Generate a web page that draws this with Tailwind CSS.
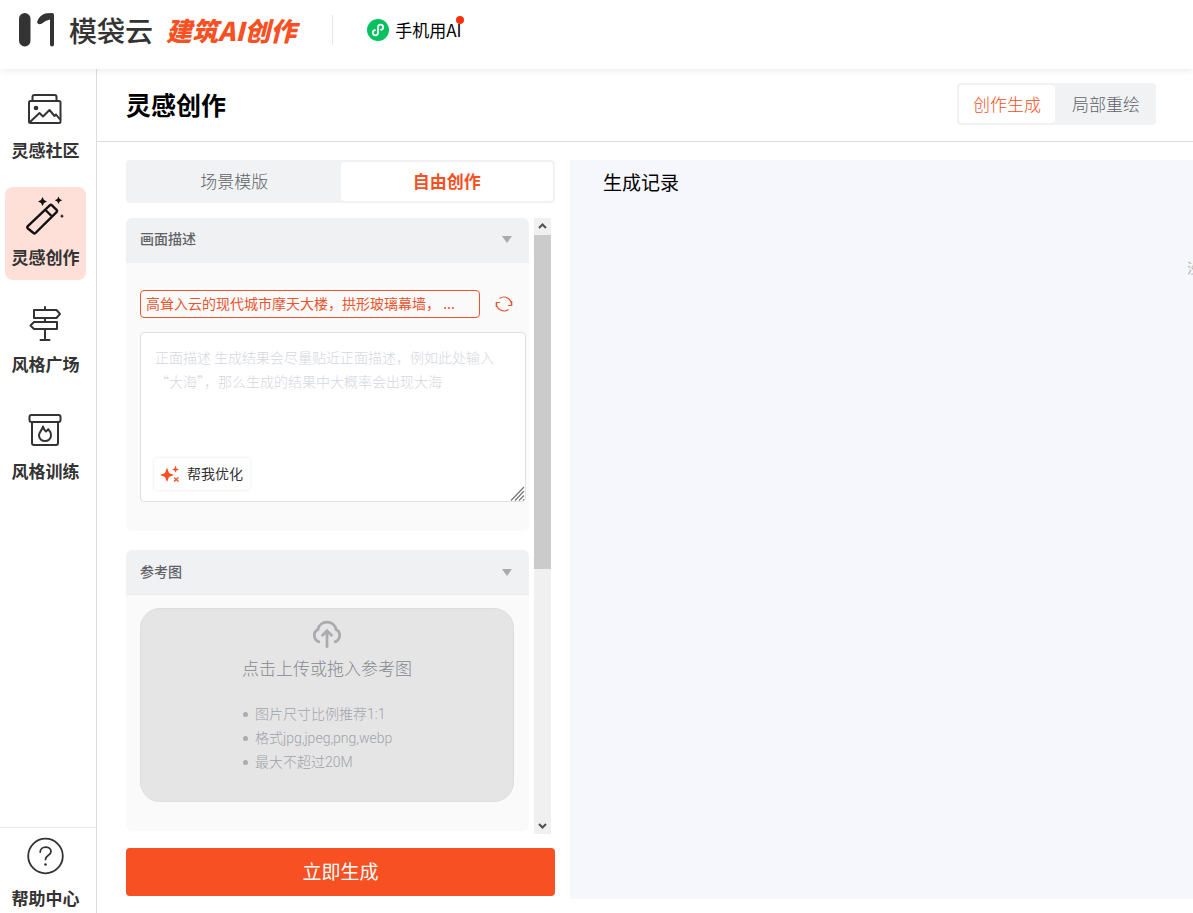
<!DOCTYPE html>
<html lang="zh-CN">
<head>
<meta charset="utf-8">
<meta name="viewport" content="width=device-width, initial-scale=1">
<title>模袋云 灵感创作</title>
<script src="https://cdn.jsdelivr.net/npm/@tailwindcss/browser@4"></script>
</head>
<body class="flex h-screen flex-col overflow-hidden bg-white font-['Noto_Sans_CJK_SC',sans-serif] text-[#333]">

<header class="relative z-10 flex h-[69px] shrink-0 items-center bg-white pb-2.5 pl-[18px] shadow-[0_1px_8px_rgba(0,0,0,0.09)]">
  <a href="#" class="flex items-center" aria-label="模袋云">
    <svg class="h-[34px] w-9" viewBox="0 0 36 34" fill="none" aria-hidden="true">
      <rect x="1" y="0" width="11.500" height="33.500" rx="5.700" fill="#333"/>
      <path d="M19 9Q21 3 27 .6Q29 0 34 0Q36 0 36 2V31.500Q36 33.500 34 33.500Q32 33.500 32 31.500V6.500Q27 7.500 24 10.500Q20 12.500 19 9Z" fill="#333"/>
    </svg>
    <span class="ml-[15px] text-[28px] leading-9 font-medium">模袋云</span>
  </a>
  <a href="#" class="ml-[13px] text-[26px] leading-9 font-black text-[#f75023] italic">建筑AI创作</a>
  <span class="ml-9 h-[30px] w-px bg-[#e5e5e5]"></span>
  <a href="#" class="relative ml-[34px] flex items-center gap-1.5 text-[17px] leading-6 text-black">
    <svg class="size-[22px]" viewBox="0 0 22 22" fill="none" aria-hidden="true">
      <circle cx="11" cy="11" r="11" fill="#07c160"/>
      <path d="M11 13.300V8.200A2.600 2.600 0 1 1 14 10.800M11 8.700V13.800A2.600 2.600 0 1 1 8 11.200" stroke="#fff" stroke-width="1.700" stroke-linecap="round"/>
    </svg>
    <span>手机用AI</span>
    <span class="absolute -top-0.5 -right-0.5 size-2 rounded-full bg-[#f5320f]"></span>
  </a>
</header>

<div class="flex min-h-0 flex-1">
  <aside class="flex w-[97px] shrink-0 flex-col border-r border-[#dcdcdc] text-[17px] leading-6 font-bold">
    <nav class="flex flex-1 flex-col gap-3.5 pt-[11px] pr-2.5 pl-[5px]">
      <a href="#" class="flex flex-col items-center gap-2.5 rounded-lg pt-2.5 pb-[11px]">
        <svg class="size-[38px]" viewBox="1 0 38 38" fill="none" stroke="#333" stroke-width="2" stroke-linejoin="round" aria-hidden="true">
          <path d="M6.500 11V7Q6.500 5 8.500 5H28.500Q30.500 5 30.500 7V11"/>
          <rect x="3" y="11" width="31.500" height="22" rx="1.500"/>
          <circle cx="10" cy="18" r="2.300" fill="#333" stroke="none"/>
          <path d="M4 32L13.500 23L17 26.500L23.500 20L28.500 26L30 24.500L34 29.500"/>
        </svg>
        <span>灵感社区</span>
      </a>
      <a href="#" class="flex flex-col items-center gap-2.5 rounded-lg bg-[#ffe0d8] pt-2.5 pb-[11px]" aria-current="page">
        <svg class="size-[38px] overflow-visible" viewBox="1 0 38 38" fill="none" stroke="#111" stroke-width="2.400" stroke-linejoin="round" aria-hidden="true">
          <path d="M26 8.300L30.800 13.100Q31.500 14 30.800 14.800L9.500 36Q8.500 37 7.500 36L1.600 31.200Q.8 30.300 1.600 29.400L24 8.200Q25 7.400 26 8.300ZM19.500 13L26 19.500"/>
          <path d="M16.500 0L18 3L21 4.500L18 6L16.500 9L15 6L12 4.500L15 3ZM32.500 -.5L33.700 2L36.200 3.300L33.700 4.500L32.500 7L31.300 4.500L28.800 3.300L31.300 2ZM36 17L36.700 18.500L38 19L36.700 19.700L36 21.200L35.300 19.700L33.800 19L35.300 18.500Z" fill="#111" stroke="none"/>
        </svg>
        <span>灵感创作</span>
      </a>
      <a href="#" class="flex flex-col items-center gap-2.5 rounded-lg pt-2.5 pb-[11px]">
        <svg class="size-[38px]" viewBox="1 0 38 38" fill="none" stroke="#333" stroke-width="2" stroke-linejoin="round" stroke-linecap="round" aria-hidden="true">
          <path d="M19 3V6M19 14V18M19 25V36M14.500 36H23.500M8 6H30.500L34 9.900L30.500 14H8ZM31 18H8L4.500 21.500L8 25H31Z"/>
        </svg>
        <span>风格广场</span>
      </a>
      <a href="#" class="flex flex-col items-center gap-2.5 rounded-lg pt-2.5 pb-[11px]">
        <svg class="size-[38px]" viewBox="1 0 38 38" fill="none" stroke="#333" stroke-width="2" stroke-linejoin="round" aria-hidden="true">
          <rect x="3.500" y="4" width="31" height="7" rx="2"/>
          <path d="M6 11V32Q6 34 8 34H30Q32 34 32 32V11"/>
          <path d="M17 15.500C17.500 18 18.300 19 20 20.500L22.300 18.300C25 21 25 23 25 24.500A6 5.500 0 0 1 13 24.500C13 21 16 19.500 17 15.500Z"/>
        </svg>
        <span>风格训练</span>
      </a>
    </nav>
    <a href="#" class="mb-[3px] flex flex-col items-center gap-[11px] border-t border-[#eaeaea] pt-[9px] pr-[5px]">
      <svg class="size-[38px]" viewBox="1 0 38 38" fill="none" stroke="#333" stroke-width="1.800" stroke-linecap="round" aria-hidden="true">
        <circle cx="19.500" cy="19" r="17.300"/>
        <path d="M14.200 15C14.200 8.500 25 8.500 25 14.500C25 18.500 19.500 18 19.500 22.500"/>
        <circle cx="19.500" cy="27.500" r="1.300" fill="#333" stroke="none"/>
      </svg>
      <span>帮助中心</span>
    </a>
  </aside>

  <main class="flex min-w-0 flex-1 flex-col">
    <div class="flex h-[73px] shrink-0 items-center justify-between border-b border-[#dcdcdc] pr-[37px] pb-0.5 pl-[29px]">
      <h1 class="text-[25px] leading-9 font-bold text-black">灵感创作</h1>
      <div class="flex h-[42px] rounded-sm bg-[#f1f2f4] p-0.5 text-[17px] leading-6 font-light" role="tablist">
        <button class="rounded-sm bg-white px-3.5 text-[#f75023]" role="tab" aria-selected="true">创作生成</button>
        <button class="pr-3.5 pl-[17px] text-[#606266]" role="tab" aria-selected="false">局部重绘</button>
      </div>
    </div>

    <div class="flex min-h-0 flex-1 gap-[15px] pt-[18px] pb-3.5 pl-[29px]">
      <section class="flex w-[429px] shrink-0 flex-col pb-[3px]">
        <div class="grid h-[43px] shrink-0 grid-cols-2 rounded-sm bg-[#f1f2f4] p-0.5 text-[17px] leading-6" role="tablist">
          <button class="pb-0.5 font-light text-[#606266]" role="tab" aria-selected="false">场景模版</button>
          <button class="rounded-sm bg-white pb-0.5 font-bold text-[#f75023]" role="tab" aria-selected="true">自由创作</button>
        </div>

        <div class="mt-[15px] flex min-h-0 flex-1 gap-[5px]">
          <div class="flex w-[403px] shrink-0 flex-col gap-[19px] overflow-hidden">
            <section class="rounded-md bg-[#fafafa] pb-[29px]">
              <h2>
                <button class="flex h-[45px] w-full items-center justify-between rounded-t-md bg-[#f0f1f3] px-3.5 pr-[17px] pb-0.5 text-sm font-medium text-[#606266]" aria-expanded="true">
                  <span class="pb-[3px]">画面描述</span>
                  <svg class="h-[7px] w-2.5" viewBox="0 0 10 7" aria-hidden="true"><path d="M0 0H10L5 7Z" fill="#aaa"/></svg>
                </button>
              </h2>
              <div class="mt-[27px] ml-3.5 flex items-center gap-[15px]">
                <button class="h-7 w-[340px] truncate rounded-sm border border-[#e9552f] px-[5px] pb-0.5 text-left text-sm text-[#e9552f]">高耸入云的现代城市摩天大楼，拱形玻璃幕墙， ...</button>
                <button aria-label="换一换">
                  <svg class="size-[18px]" viewBox="0 0 18 18" fill="none" stroke="#e9552f" stroke-width="1.200" aria-hidden="true">
                    <path d="M4.500 3.500A7.500 7 0 0 1 16.300 10.500M16.700 6V10.500H13M13.500 14.500A7.500 7 0 0 1 1.700 7.500M1.300 12V7.500H5"/>
                  </svg>
                </button>
              </div>
              <div class="relative mt-3.5 mr-[3px] ml-3.5">
                <textarea class="block h-[170px] w-full resize-none rounded-sm border border-[#dfe0e4] bg-white px-3.5 py-3 text-sm leading-6 placeholder:font-light placeholder:text-[#d4d7de]" aria-label="正面描述" placeholder="正面描述 生成结果会尽量贴近正面描述，例如此处输入“大海”，那么生成的结果中大概率会出现大海"></textarea>
                <button class="absolute bottom-3 left-3.5 flex h-8 w-24 items-center gap-[7px] rounded-sm bg-white pl-1.5 text-sm text-[#333] shadow-[0_0_3px_rgba(70,80,140,0.16)]">
                  <svg class="size-5" viewBox="0 0 20 20" fill="#f75023" aria-hidden="true">
                    <path d="M7 3.500L9 9L14 11L9 13L7 18L5 13L0 11L5 9ZM15.500 1.500L16.500 4.500L19 5.500L16.500 6.500L15.500 8.500L14.500 6.500L12 5.500L14.500 4.500Z"/>
                    <path d="M14 13.500L18.500 17.500M18.500 13.500L14 17.500" stroke="#f75023" stroke-width="1.400"/>
                  </svg>
                  <span class="pb-[3px]">帮我优化</span>
                </button>
                <svg class="absolute right-px bottom-px size-[15px]" viewBox="0 0 15 15" stroke="#777" stroke-width="1.200" aria-hidden="true"><path d="M1 14.500L14 1M5 14.500L14 5M9 14.500L14 9.500M13 14.500L14 13"/></svg>
              </div>
            </section>

            <section class="rounded-md bg-[#fafafa] pb-[29px]">
              <h2>
                <button class="flex h-[45px] w-full items-center justify-between rounded-t-md border-b border-[#ececee] bg-[#f0f1f3] px-3.5 pr-[17px] text-sm font-medium text-[#606266]" aria-expanded="true">
                  <span class="pb-0.5">参考图</span>
                  <svg class="h-[7px] w-2.5" viewBox="0 0 10 7" aria-hidden="true"><path d="M0 0H10L5 7Z" fill="#aaa"/></svg>
                </button>
              </h2>
              <button class="mt-[13px] mr-[15px] ml-3.5 flex h-[194px] w-[374px] flex-col items-center rounded-[20px] border border-[#dedede] bg-[#e5e5e5] pt-2.5 font-light">
                <svg class="h-[30px] w-8" viewBox="0 0 30 28" fill="none" stroke="#aaabae" stroke-width="2.600" aria-hidden="true">
                  <path d="M8.500 21.500A6.300 6.300 0 0 1 6.500 9.700A8.700 8.700 0 0 1 23.500 9.700A6.300 6.300 0 0 1 21.500 21.500M15 27V11.500M10 16L15 11L20 16"/>
                </svg>
                <span class="mt-[7px] text-[17px] leading-6 text-[#85888f]">点击上传或拖入参考图</span>
                <span class="mt-[22px] flex w-[168px] flex-col text-left font-[Roboto,'Noto_Sans_CJK_SC',sans-serif] text-sm leading-6 text-[#a0a3aa]">
                  <span class="flex items-center gap-[7px]"><i class="size-[5px] rounded-full bg-[#a8abb2]"></i>图片尺寸比例推荐1:1</span>
                  <span class="flex items-center gap-[7px]"><i class="size-[5px] rounded-full bg-[#a8abb2]"></i>格式jpg,jpeg,png,webp</span>
                  <span class="flex items-center gap-[7px]"><i class="size-[5px] rounded-full bg-[#a8abb2]"></i>最大不超过20M</span>
                </span>
              </button>
            </section>
          </div>

          <div class="flex w-[17px] shrink-0 flex-col bg-[#f0f0f0]" aria-hidden="true">
            <svg class="size-[17px]" viewBox="0 0 17 17" fill="none" stroke="#505050" stroke-width="2"><path d="M5 10L8.500 6.500L12 10"/></svg>
            <div class="flex-1"><div class="h-[334px] bg-[#cbcbcb]"></div></div>
            <svg class="size-[17px]" viewBox="0 0 17 17" fill="none" stroke="#505050" stroke-width="2"><path d="M5 7L8.500 10.500L12 7"/></svg>
          </div>
        </div>

        <button class="mt-3.5 h-12 shrink-0 rounded-sm bg-[#f75023] pb-0.5 text-[19px] leading-7 text-white">立即生成</button>
      </section>

      <section class="min-w-0 flex-1 overflow-hidden bg-[#f5f7fc]">
        <h2 class="mt-2 ml-[33px] text-[19px] leading-7 text-black">生成记录</h2>
        <p class="mt-[61px] ml-auto w-1.5 overflow-hidden text-sm leading-5 whitespace-nowrap text-[#b4b6bb]">没有更多了</p>
      </section>
    </div>
  </main>
</div>
</body>
</html>
